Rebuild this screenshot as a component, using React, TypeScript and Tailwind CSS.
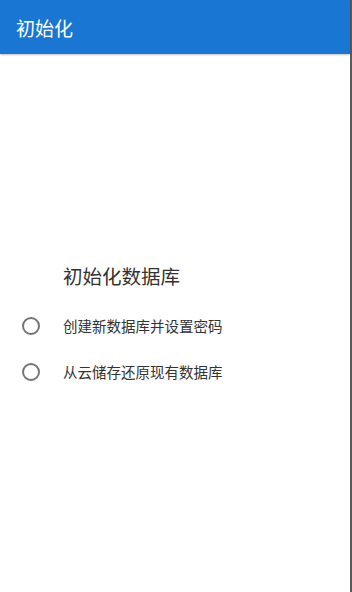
import React from 'react';

const Radio = () => (
  <span className="w-[18px] h-[18px] rounded-full border-2 border-[#757575] shrink-0" />
);

const App: React.FC = () => {
  const font = { fontFamily: '"Noto Sans CJK SC", "Noto Sans", sans-serif' };
  return (
    <div className="w-[352px] h-[592px] bg-white flex flex-col border-r-2 border-[#5a5a5a]" style={font}>
      <header className="h-[54px] bg-[#1976d2] flex items-center px-4 shrink-0 shadow-[0_1px_2px_rgba(0,0,0,0.25)]">
        <h1 className="text-white text-[19px] leading-none">初始化</h1>
      </header>
      <main className="flex flex-col pt-[208px]">
        <h2 className="pl-[63px] text-[19.5px] leading-[28px] text-[#333]">初始化数据库</h2>
        <div className="flex flex-col gap-[24px] mt-[25px] pl-[22px]">
          <label className="flex items-center gap-[23px] h-[22px]">
            <Radio />
            <span className="text-[14.5px] text-[#333]">创建新数据库并设置密码</span>
          </label>
          <label className="flex items-center gap-[23px] h-[22px]">
            <Radio />
            <span className="text-[14.5px] text-[#333]">从云储存还原现有数据库</span>
          </label>
        </div>
      </main>
    </div>
  );
};

export default App;
